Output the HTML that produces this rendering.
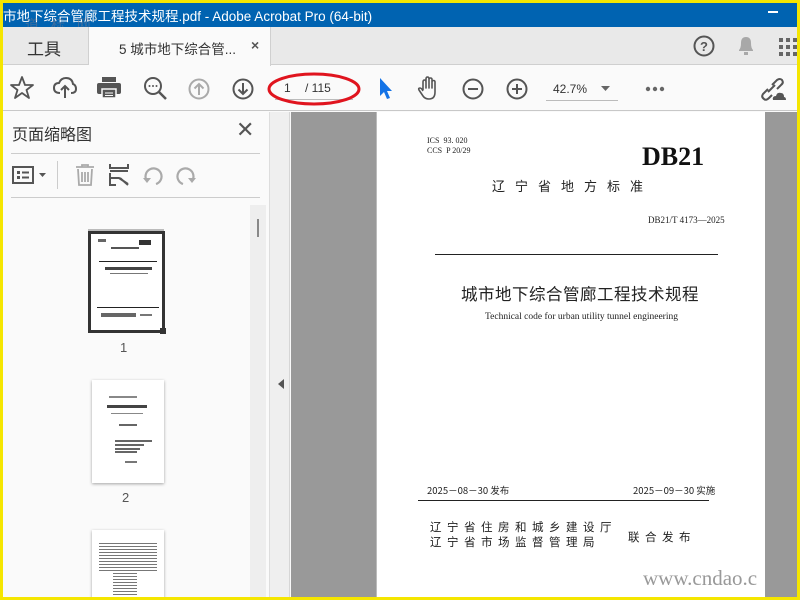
<!DOCTYPE html>
<html><head><meta charset="utf-8"><style>
*{margin:0;padding:0;box-sizing:border-box}
body{width:800px;height:600px;overflow:hidden;background:#f5e600;font-family:"Liberation Sans","Noto Sans CJK SC",sans-serif;position:relative}
.a{position:absolute}
.cjk{font-family:"Noto Sans CJK SC",sans-serif}
.ser{font-family:"Liberation Serif","Noto Serif CJK SC",serif}
svg{position:absolute;overflow:visible}
</style></head><body>
<div class="a" style="left:3px;top:3px;width:794px;height:594px;background:#fafafa;overflow:hidden">
<div class="a" style="left:0;top:0;width:794px;height:24px;background:#0063b1"></div>
<div class="a" style="left:0;top:2px;color:#fff;font-size:13.5px;white-space:nowrap">市地下综合管廊工程技术规程.pdf - Adobe Acrobat Pro (64-bit)</div>
<div class="a" style="left:765px;top:8px;width:10px;height:1.5px;background:#fff"></div>
<div class="a" style="left:22px;top:12px;color:rgba(120,120,140,.5);font-size:14px;letter-spacing:4px" >道 标 网</div>
<div class="a" style="left:0;top:24px;width:794px;height:38px;background:#e9e9e9;border-bottom:1px solid #cfcfcf"></div>
<div class="a" style="left:0;top:24px;width:86px;height:38px;border-right:1px solid #d0d0d0"></div>
<div class="a" style="left:24px;top:32px;font-size:17px;color:#333">工具</div>
<div class="a" style="left:86px;top:24px;width:182px;height:39px;background:#fafafa;border-right:1px solid #d0d0d0"></div>
<div class="a" style="left:116px;top:35px;font-size:13.5px;color:#333">5 城市地下综合管...</div>
<div class="a" style="left:248px;top:34px;font-size:14px;color:#555;font-weight:bold">×</div>
<svg style="left:690px;top:32px" width="24" height="24"><circle cx="11" cy="11" r="9.5" fill="none" stroke="#555" stroke-width="2"/><text x="11" y="16" font-size="13" font-weight="bold" fill="#555" text-anchor="middle" font-family="Liberation Sans">?</text></svg>
<svg style="left:733px;top:31px" width="20" height="24"><path d="M3 17 L3 16 Q5 14 5 9 Q5 3 10 3 Q15 3 15 9 Q15 14 17 16 L17 17 Z" fill="#a8a8a8"/><rect x="8" y="18" width="4" height="3" fill="#a8a8a8"/></svg>
<svg style="left:776px;top:35px" width="18" height="18" fill="#666"><rect x="0" y="0" width="4" height="4"/><rect x="7" y="0" width="4" height="4"/><rect x="14" y="0" width="4" height="4"/><rect x="0" y="7" width="4" height="4"/><rect x="7" y="7" width="4" height="4"/><rect x="14" y="7" width="4" height="4"/><rect x="0" y="14" width="4" height="4"/><rect x="7" y="14" width="4" height="4"/><rect x="14" y="14" width="4" height="4"/></svg>
<div class="a" style="left:0;top:63px;width:794px;height:45px;background:#fafafa;border-bottom:1px solid #c8c8c8"></div>
<svg style="left:7px;top:73px" width="24" height="24"><path d="M12 1 L15 9 L23 9 L16.5 14 L19 22 L12 17 L5 22 L7.5 14 L1 9 L9 9 Z" fill="none" stroke="#555" stroke-width="1.8" stroke-linejoin="round"/></svg>
<svg style="left:50px;top:73px" width="24" height="24"><path d="M7 17 Q1 17 1 12 Q1 7 6 7 Q8 2 13 2 Q19 2 20 8 Q23 9 23 13 Q23 17 18 17" fill="none" stroke="#555" stroke-width="2"/><path d="M12 22 V10 M8 14 L12 10 L16 14" fill="none" stroke="#555" stroke-width="2"/></svg>
<svg style="left:94px;top:74px" width="24" height="22"><rect x="5" y="0" width="14" height="5" fill="#555"/><rect x="0" y="6" width="24" height="11" rx="2" fill="#555"/><rect x="5" y="12" width="14" height="9" fill="#555" stroke="#fafafa" stroke-width="1.5"/><path d="M8 16H16M8 18.5H16" stroke="#fafafa"/></svg>
<svg style="left:140px;top:73px" width="26" height="26"><circle cx="10" cy="10" r="8" fill="none" stroke="#555" stroke-width="2"/><path d="M16 16 L23 23" stroke="#555" stroke-width="2.5"/><circle cx="6.5" cy="10" r="1" fill="#555"/><circle cx="10" cy="10" r="1" fill="#555"/><circle cx="13.5" cy="10" r="1" fill="#555"/></svg>
<svg style="left:185px;top:75px" width="22" height="22"><circle cx="11" cy="11" r="9.5" fill="none" stroke="#aaa" stroke-width="2"/><path d="M11 17V6M6.5 10.5L11 6L15.5 10.5" fill="none" stroke="#aaa" stroke-width="2"/></svg>
<svg style="left:229px;top:75px" width="22" height="22"><circle cx="11" cy="11" r="9.5" fill="none" stroke="#555" stroke-width="2"/><path d="M11 5V16M6.5 11.5L11 16L15.5 11.5" fill="none" stroke="#555" stroke-width="2"/></svg>
<div class="a" style="left:272px;top:73px;width:78px;height:24px;border-bottom:1px solid #bbb"></div>
<div class="a" style="left:281px;top:78px;font-size:12px;color:#333">1</div>
<div class="a" style="left:302px;top:78px;font-size:12px;color:#333">/ 115</div>
<svg style="left:264px;top:68px" width="94" height="36"><ellipse cx="47" cy="18" rx="45" ry="15" fill="none" stroke="#e0141e" stroke-width="3"/></svg>
<svg style="left:375px;top:74px" width="16" height="24"><path d="M2 1 L2 19 L6 15 L9 22 L12 21 L9 14 L14 14 Z" fill="#1473e6"/></svg>
<svg style="left:414px;top:73px" width="24" height="26"><path d="M6 14 V6 Q6 4 7.5 4 Q9 4 9 6 V12 V3 Q9 1 10.5 1 Q12 1 12 3 V12 V3.5 Q12 2 13.5 2 Q15 2 15 3.5 V12 V6 Q15 4.5 16.5 4.5 Q18 4.5 18 6 V16 Q18 23 12 23 Q8 23 6 20 L2 14 Q1 12 3 12 Q4.5 12 6 15" fill="none" stroke="#555" stroke-width="1.6" stroke-linejoin="round"/></svg>
<svg style="left:459px;top:75px" width="22" height="22"><circle cx="11" cy="11" r="9.5" fill="none" stroke="#555" stroke-width="2"/><path d="M6 11H16" stroke="#555" stroke-width="2"/></svg>
<svg style="left:503px;top:75px" width="22" height="22"><circle cx="11" cy="11" r="9.5" fill="none" stroke="#555" stroke-width="2"/><path d="M6 11H16M11 6V16" stroke="#555" stroke-width="2"/></svg>
<div class="a" style="left:543px;top:75px;width:72px;height:23px;border-bottom:1px solid #bbb"></div>
<div class="a" style="left:550px;top:79px;font-size:12px;color:#333">42.7%</div>
<svg style="left:598px;top:83px" width="10" height="6"><path d="M0 0H9L4.5 5Z" fill="#666"/></svg>
<svg style="left:642px;top:83px" width="20" height="6" fill="#666"><circle cx="3" cy="3" r="2.2"/><circle cx="10" cy="3" r="2.2"/><circle cx="17" cy="3" r="2.2"/></svg>
<svg style="left:756px;top:73px" width="28" height="26"><path d="M9 13 L4 18 Q2 21 5 23 Q7 25 10 22 L13 19 M13 9 L18 4 Q21 2 23 4 Q25 7 22 9 L18 13 M9 16 L16 9" fill="none" stroke="#555" stroke-width="2"/><path d="M14 24 Q13 20 17 20 Q18 16 22 17 Q25 17 25 21 Q27 21 27 24 Z" fill="#555"/></svg>
<div class="a" style="left:0;top:109px;width:267px;height:485px;background:#fafafa;border-right:1px solid #ddd"></div>
<div class="a" style="left:9px;top:118px;font-size:16px;color:#333">页面缩略图</div>
<div class="a" style="left:233px;top:114px;font-size:22px;color:#555">✕</div>
<div class="a" style="left:8px;top:150px;width:249px;height:1px;background:#ccc"></div>
<div class="a" style="left:8px;top:194px;width:249px;height:1px;background:#ccc"></div>
<svg style="left:9px;top:163px" width="36" height="20"><rect x="1" y="1" width="20" height="16" fill="none" stroke="#555" stroke-width="2"/><rect x="5" y="5" width="3" height="3" fill="#555"/><rect x="5" y="10" width="3" height="3" fill="#555"/><path d="M10 6.5H17M10 11.5H17" stroke="#555" stroke-width="2"/><path d="M27 7H34L30.5 11Z" fill="#555"/></svg>
<div class="a" style="left:54px;top:158px;width:1px;height:28px;background:#ccc"></div>
<svg style="left:71px;top:161px" width="22" height="22"><path d="M2 3H20M8 3V1H14V3M4 5L5 21H17L18 5M8 8V18M11 8V18M14 8V18" fill="none" stroke="#aaa" stroke-width="1.8"/></svg>
<svg style="left:106px;top:161px" width="20" height="22"><path d="M1 0V4H19V0M1 7H19M1 9V21H7M11 14L19 21M1 14H10L19 20" fill="none" stroke="#555" stroke-width="2"/></svg>
<svg style="left:139px;top:163px" width="22" height="20"><path d="M5 15 A8 8 0 1 1 14 18" fill="none" stroke="#aaa" stroke-width="2.2"/><path d="M1 12L5 17L9 12Z" fill="#aaa"/></svg>
<svg style="left:172px;top:163px" width="22" height="20"><path d="M17 15 A8 8 0 1 0 8 18" fill="none" stroke="#aaa" stroke-width="2.2"/><path d="M21 12L17 17L13 12Z" fill="#aaa"/></svg>
<div class="a" style="left:247px;top:202px;width:16px;height:392px;background:#eee"></div>
<div class="a" style="left:254px;top:216px;width:2px;height:18px;background:#888"></div>
<div class="a" style="left:85px;top:226px;width:76px;height:3px;background:#bbb"></div>
<div class="a" style="left:85px;top:228px;width:77px;height:102px;background:#fff;border:3px solid #333"></div>
<div class="a" style="left:157px;top:325px;width:6px;height:6px;background:#333"></div>
<div class="a" style="left:95px;top:236px;width:8px;height:3px;background:#666"></div>
<div class="a" style="left:136px;top:237px;width:12px;height:5px;background:#333"></div>
<div class="a" style="left:108px;top:244px;width:28px;height:2px;background:#555"></div>
<div class="a" style="left:96px;top:258px;width:58px;height:1px;background:#222"></div>
<div class="a" style="left:102px;top:264px;width:47px;height:3px;background:#444"></div>
<div class="a" style="left:107px;top:270px;width:38px;height:1px;background:#777"></div>
<div class="a" style="left:94px;top:304px;width:62px;height:1px;background:#222"></div>
<div class="a" style="left:98px;top:310px;width:35px;height:4px;background:#666"></div>
<div class="a" style="left:137px;top:311px;width:12px;height:2px;background:#777"></div>
<div class="a" style="left:117px;top:337px;font-size:13px;color:#555">1</div>
<div class="a" style="left:89px;top:377px;width:72px;height:103px;background:#fff;box-shadow:0 1px 3px rgba(0,0,0,.35)"></div>
<div class="a" style="left:106px;top:393px;width:28px;height:2px;background:#888"></div>
<div class="a" style="left:104px;top:402px;width:40px;height:3px;background:#444"></div>
<div class="a" style="left:108px;top:410px;width:32px;height:1px;background:#888"></div>
<div class="a" style="left:116px;top:421px;width:18px;height:2px;background:#666"></div>
<div class="a" style="left:112px;top:437px;width:37px;height:2px;background:#666"></div>
<div class="a" style="left:112px;top:441px;width:29px;height:2px;background:#666"></div>
<div class="a" style="left:112px;top:445px;width:25px;height:2px;background:#666"></div>
<div class="a" style="left:112px;top:448px;width:22px;height:2px;background:#666"></div>
<div class="a" style="left:122px;top:458px;width:12px;height:2px;background:#777"></div>
<div class="a" style="left:119px;top:487px;font-size:13px;color:#555">2</div>
<div class="a" style="left:89px;top:527px;width:72px;height:70px;background:#fff;box-shadow:0 1px 3px rgba(0,0,0,.35)"></div>
<div class="a" style="left:96px;top:540px;width:58px;height:30px;background:repeating-linear-gradient(#777 0 1px,transparent 1px 3px)"></div>
<div class="a" style="left:110px;top:570px;width:24px;height:27px;background:repeating-linear-gradient(#777 0 1px,transparent 1px 3px)"></div>
<div class="a" style="left:267px;top:109px;width:20px;height:485px;background:#efefef;border-right:1px solid #d6d6d6"></div>
<svg style="left:275px;top:376px" width="6" height="10"><path d="M6 0V10L0 5Z" fill="#555"/></svg>
<div class="a" style="left:288px;top:109px;width:506px;height:485px;background:#999"></div>
<div class="a" style="left:373px;top:109px;width:389px;height:485px;background:#fff;border-left:1px solid #bbb"></div>
<div class="a ser" style="left:424px;top:133px;font-size:8px;line-height:10px;color:#222">ICS&nbsp;&nbsp;93. 020<br>CCS&nbsp;&nbsp;P 20/29</div>
<div class="a ser" style="left:639px;top:139px;font-size:26px;font-weight:bold;color:#111">DB21</div>
<div class="a cjk" style="left:489px;top:173px;font-size:13px;color:#222;letter-spacing:10px">辽宁省地方标准</div>
<div class="a ser" style="left:645px;top:212px;font-size:9px;color:#222">DB21/T 4173—2025</div>
<div class="a" style="left:432px;top:251px;width:283px;height:1px;background:#222"></div>
<div class="a cjk" style="left:458px;top:278px;font-size:16.5px;color:#222;letter-spacing:0.5px">城市地下综合管廊工程技术规程</div>
<div class="a ser" style="left:482px;top:309px;font-size:9.5px;color:#222">Technical code for urban utility tunnel engineering</div>
<div class="a cjk" style="left:424px;top:480px;font-size:9.5px;color:#222">2025－08－30 发布</div>
<div class="a cjk" style="left:630px;top:480px;font-size:9.5px;color:#222">2025－09－30 实施</div>
<div class="a" style="left:415px;top:497px;width:291px;height:1px;background:#222"></div>
<div class="a cjk" style="left:427px;top:517px;font-size:11.5px;line-height:15px;color:#222;letter-spacing:5.5px">辽宁省住房和城乡建设厅<br>辽宁省市场监督管理局</div>
<div class="a cjk" style="left:625px;top:526px;font-size:11.5px;color:#222;letter-spacing:5.5px">联合发布</div>
<div class="a ser" style="left:640px;top:563px;font-size:21px;color:#999;white-space:nowrap;width:122px;overflow:hidden">www.cndao.c</div>
</div>
</body></html>
